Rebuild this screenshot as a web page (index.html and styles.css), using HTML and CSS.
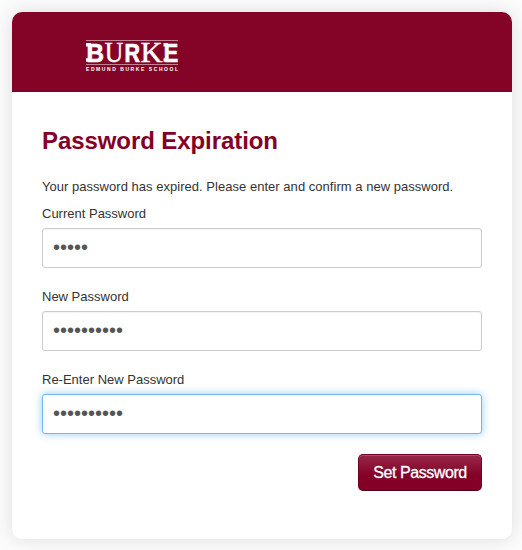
FILE: index.html
```html
<!DOCTYPE html>
<html lang="en">
<head>
<meta charset="utf-8">
<title>Password Expiration</title>
<link rel="stylesheet" href="styles.css">
</head>
<body>
<main class="card">
  <header class="card-header">
    <svg class="logo" width="94" height="34" viewBox="0 0 94 34" role="img" aria-label="Burke, Edmund Burke School">
      <path class="rule" d="M1 1.5H93M1 25.5H93"/>
      <path d="M1 4H6V7.5H1ZM1 19.3H6V22.8H1ZM78.5 4H83V7.5H78.5ZM78.5 19.3H83V22.8H78.5Z"/>
      <g class="wordmark">
        <text class="sans" x="1.5" y="22.8" textLength="17.5" lengthAdjust="spacingAndGlyphs">B</text>
        <text class="serif" x="19.8" y="22.8" textLength="18.5" lengthAdjust="spacingAndGlyphs">U</text>
        <text class="sans" x="39.4" y="22.8" textLength="15.5" lengthAdjust="spacingAndGlyphs">R</text>
        <text class="serif" x="55.5" y="22.8" textLength="22" lengthAdjust="spacingAndGlyphs">K</text>
        <text class="sans" x="78.8" y="22.8" textLength="14.5" lengthAdjust="spacingAndGlyphs">E</text>
      </g>
      <text class="tagline" x="1" y="32" textLength="92">EDMUND BURKE SCHOOL</text>
    </svg>
  </header>
  <form class="card-body">
    <h1>Password Expiration</h1>
    <p class="message">Your password has expired. Please enter and confirm a new password.</p>
    <label for="current">Current Password</label>
    <input id="current" type="password" value="12345">
    <label for="new">New Password</label>
    <input id="new" type="password" value="1234567890">
    <label for="confirm">Re-Enter New Password</label>
    <input id="confirm" class="focused" type="password" value="1234567890">
    <div class="actions"><button type="button">Set Password</button></div>
  </form>
</main>
</body>
</html>
```
FILE: styles.css
```css
* { box-sizing: border-box; }
body {
  margin: 0;
  padding: 12px 10px 0 12px;
  height: 550px;
  overflow: hidden;
  background: #fcfcfc;
  color: #333;
  font: 13px/20px "Liberation Sans", Arial, sans-serif;
}
.card {
  height: 527px;
  border-radius: 10px;
  background: #fff;
  box-shadow: 0 0 20px rgba(0, 0, 0, .13);
  overflow: hidden;
}
.card-header {
  height: 80px;
  padding: 27px 73px 0;
  background: #840427;
  border-bottom: 1px solid #7c0224;
}
.logo { display: block; overflow: visible; fill: #fff; }
.rule { stroke: #c58294; stroke-width: 1; }
.serif { font-family: "Liberation Serif", serif; font-size: 28.5px; stroke: #fff; stroke-width: .5; }
.sans { font-family: "Liberation Sans", sans-serif; font-weight: bold; font-size: 26.5px; stroke: #fff; stroke-width: .7; }
.tagline { font: bold 5px "Liberation Sans", sans-serif; }
.card-body { padding: 34px 30px 0; }
h1 {
  margin: 0 0 21px;
  color: #840027;
  font-size: 24px;
  line-height: 30px;
  letter-spacing: -.08px;
}
.message { margin: 0 0 7px; white-space: nowrap; letter-spacing: .03px; }
label { display: block; margin-bottom: 4px; }
input {
  display: block;
  width: 100%;
  height: 40px;
  margin: 0 0 19px;
  padding: 7px 10px 9px;
  border: 1px solid #ccc;
  border-radius: 3px;
  outline: 0;
  background: #fff;
  color: #555;
  font: 20px/20px "Liberation Sans", Arial, sans-serif;
  box-shadow: inset 0 1px 1px rgba(0, 0, 0, .05);
}
.focused {
  border-color: #72b7ee;
  box-shadow: 0 0 8px rgba(82, 168, 236, .6);
}
.actions { display: flex; justify-content: flex-end; padding-top: 1px; }
button {
  width: 124px;
  height: 37px;
  padding: 0;
  border: 1px solid #750022;
  border-bottom-color: #50001a;
  border-radius: 5px;
  background: linear-gradient(#972849, #840027 60%);
  box-shadow: inset 0 1px 0 rgba(255, 255, 255, .18);
  color: #fff;
  font: 16px/20px "Liberation Sans", Arial, sans-serif;
  letter-spacing: -.42px;
  text-shadow: 0 -1px 0 rgba(0, 0, 0, .25);
  -webkit-text-stroke: .3px #fff;
}
```
